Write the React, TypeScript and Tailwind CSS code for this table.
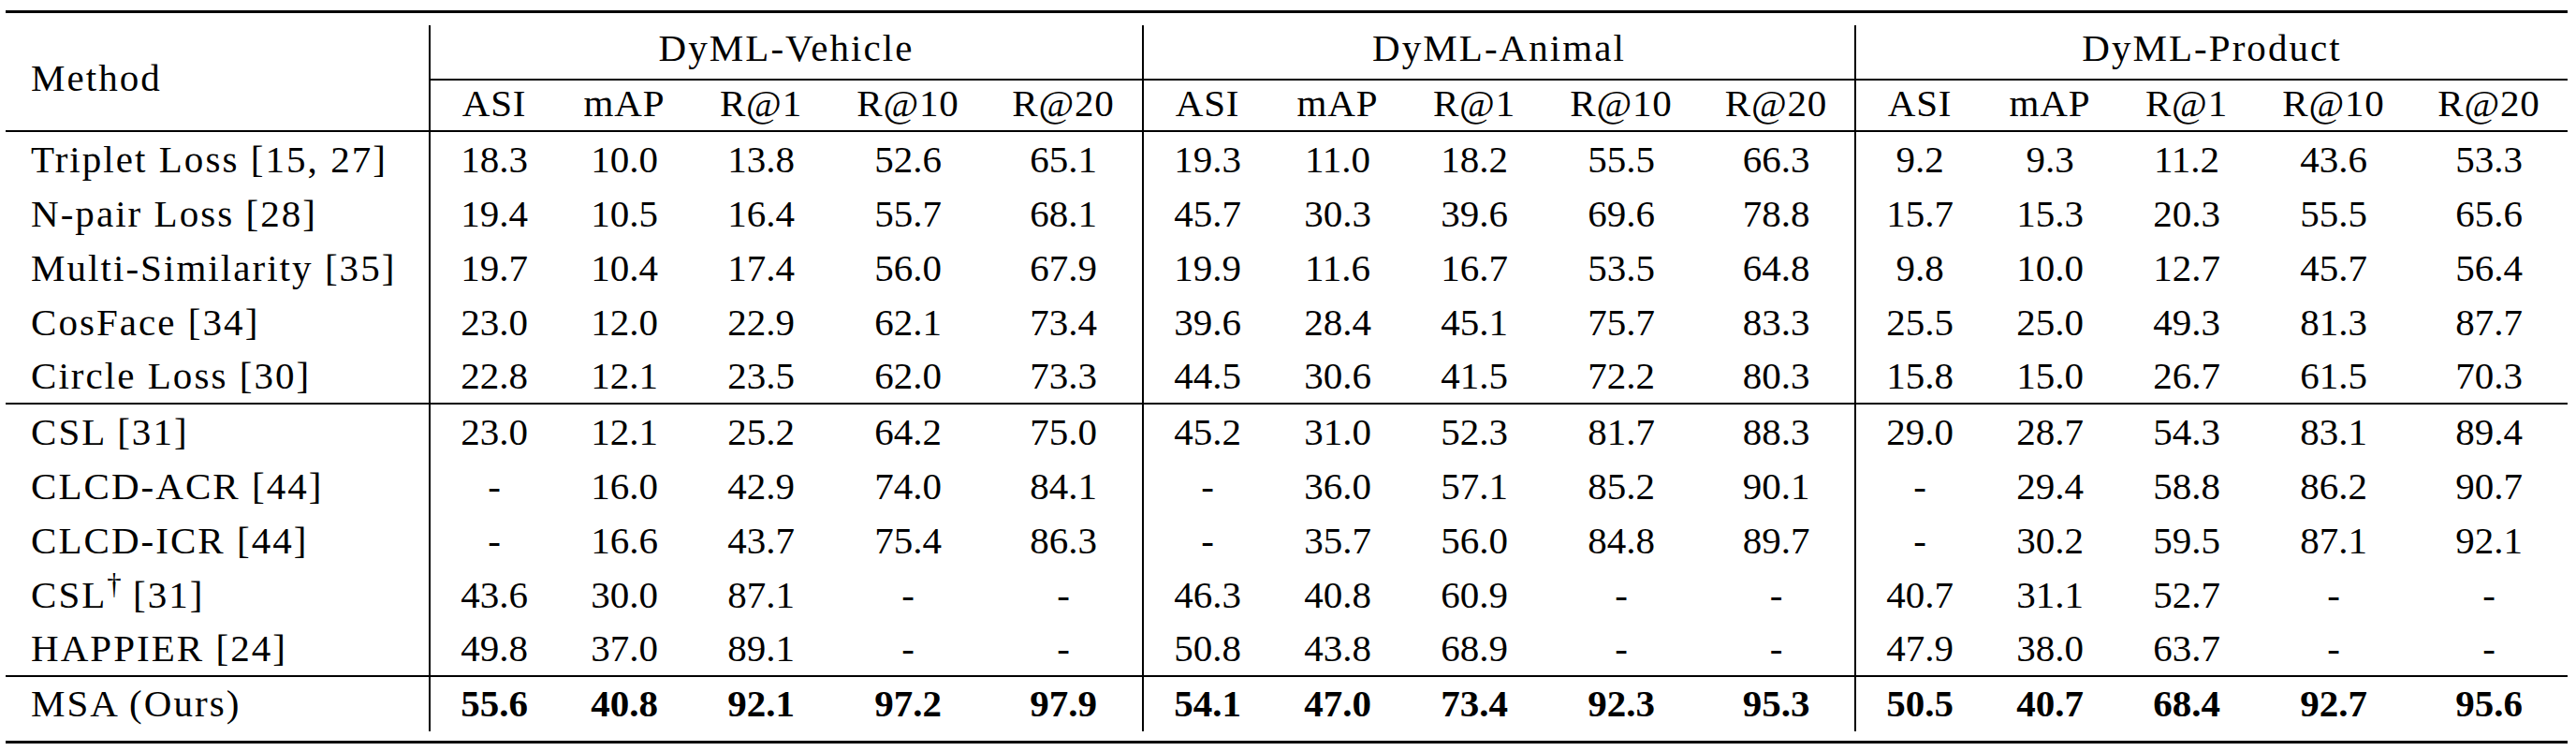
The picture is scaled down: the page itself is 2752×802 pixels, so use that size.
const groups = ["DyML-Vehicle", "DyML-Animal", "DyML-Product"];
const metrics = ["ASI", "mAP", "R@1", "R@10", "R@20"];
const colWidths = [
  "w-[452px]",
  "w-[138px]", "w-[142px]", "w-[150px]", "w-[164px]", "w-[168px]",
  "w-[138px]", "w-[142px]", "w-[150px]", "w-[164px]", "w-[167px]",
  "w-[138px]", "w-[142px]", "w-[150px]", "w-[164px]", "w-[168px]",
];

type Row = { name: string; cite: string; dagger?: boolean; values: string[]; bold?: boolean; ruleBelow?: boolean };

const rows: Row[] = [
  { name: "Triplet Loss", cite: "[15, 27]", values: ["18.3", "10.0", "13.8", "52.6", "65.1", "19.3", "11.0", "18.2", "55.5", "66.3", "9.2", "9.3", "11.2", "43.6", "53.3"] },
  { name: "N-pair Loss", cite: "[28]", values: ["19.4", "10.5", "16.4", "55.7", "68.1", "45.7", "30.3", "39.6", "69.6", "78.8", "15.7", "15.3", "20.3", "55.5", "65.6"] },
  { name: "Multi-Similarity", cite: "[35]", values: ["19.7", "10.4", "17.4", "56.0", "67.9", "19.9", "11.6", "16.7", "53.5", "64.8", "9.8", "10.0", "12.7", "45.7", "56.4"] },
  { name: "CosFace", cite: "[34]", values: ["23.0", "12.0", "22.9", "62.1", "73.4", "39.6", "28.4", "45.1", "75.7", "83.3", "25.5", "25.0", "49.3", "81.3", "87.7"] },
  { name: "Circle Loss", cite: "[30]", ruleBelow: true, values: ["22.8", "12.1", "23.5", "62.0", "73.3", "44.5", "30.6", "41.5", "72.2", "80.3", "15.8", "15.0", "26.7", "61.5", "70.3"] },
  { name: "CSL", cite: "[31]", values: ["23.0", "12.1", "25.2", "64.2", "75.0", "45.2", "31.0", "52.3", "81.7", "88.3", "29.0", "28.7", "54.3", "83.1", "89.4"] },
  { name: "CLCD-ACR", cite: "[44]", values: ["-", "16.0", "42.9", "74.0", "84.1", "-", "36.0", "57.1", "85.2", "90.1", "-", "29.4", "58.8", "86.2", "90.7"] },
  { name: "CLCD-ICR", cite: "[44]", values: ["-", "16.6", "43.7", "75.4", "86.3", "-", "35.7", "56.0", "84.8", "89.7", "-", "30.2", "59.5", "87.1", "92.1"] },
  { name: "CSL", cite: "[31]", dagger: true, values: ["43.6", "30.0", "87.1", "-", "-", "46.3", "40.8", "60.9", "-", "-", "40.7", "31.1", "52.7", "-", "-"] },
  { name: "HAPPIER", cite: "[24]", ruleBelow: true, values: ["49.8", "37.0", "89.1", "-", "-", "50.8", "43.8", "68.9", "-", "-", "47.9", "38.0", "63.7", "-", "-"] },
  { name: "MSA (Ours)", cite: "", bold: true, values: ["55.6", "40.8", "92.1", "97.2", "97.9", "54.1", "47.0", "73.4", "92.3", "95.3", "50.5", "40.7", "68.4", "92.7", "95.6"] },
];

const App = () => {
  return (
    <div className="min-h-screen bg-white pt-[11px] pl-[6px] text-black font-['Liberation_Serif',serif] text-[41px] leading-none">
      <div className="w-[2737px]">
        {/* top rule */}
        <div className="h-[3px] bg-black" />

        <table className="table-fixed border-separate border-spacing-0 w-[2737px]">
          <colgroup>
            {colWidths.map((w, i) => (
              <col key={i} className={w} />
            ))}
          </colgroup>
          <tbody>
            <tr>
              <td colSpan={16} className="h-[13px] p-0" />
            </tr>

            {/* dataset headers */}
            <tr className="h-[59px]">
              <td rowSpan={2} className="pl-[27px] align-middle text-left tracking-[0.05em] border-b-2 border-black">
                Method
              </td>
              {groups.map((g) => (
                <td key={g} colSpan={5} className="text-center align-middle pb-[8px] tracking-[0.05em] border-l-2 border-b-2 border-black">
                  {g}
                </td>
              ))}
            </tr>

            {/* metric headers */}
            <tr className="h-[55px]">
              {groups.map((g) =>
                metrics.map((m, j) => (
                  <td
                    key={g + m}
                    className={`text-center align-middle pb-[4px] tracking-[0.02em] border-b-2 border-black ${j === 0 ? "border-l-2" : ""}`}
                  >
                    {m}
                  </td>
                ))
              )}
            </tr>

            {rows.map((row, i) => (
              <tr key={i} className="h-[58.2px]">
                <td className={`pl-[27px] text-left align-middle tracking-[0.05em] whitespace-nowrap border-black ${row.ruleBelow ? "border-b-2" : ""}`}>
                  {row.name}
                  {row.dagger && <sup className="tracking-normal">†</sup>}
                  {row.cite && ` ${row.cite}`}
                </td>
                {row.values.map((v, j) => (
                  <td
                    key={j}
                    className={`text-center align-middle border-black ${j % 5 === 0 ? "border-l-2" : ""} ${row.ruleBelow ? "border-b-2" : ""} ${row.bold ? "font-bold" : ""}`}
                  >
                    {v}
                  </td>
                ))}
              </tr>
            ))}

            <tr>
              <td colSpan={16} className="h-[10px] p-0" />
            </tr>
          </tbody>
        </table>

        {/* bottom rule */}
        <div className="h-[3px] bg-black" />
      </div>
    </div>
  );
};

export default App;
